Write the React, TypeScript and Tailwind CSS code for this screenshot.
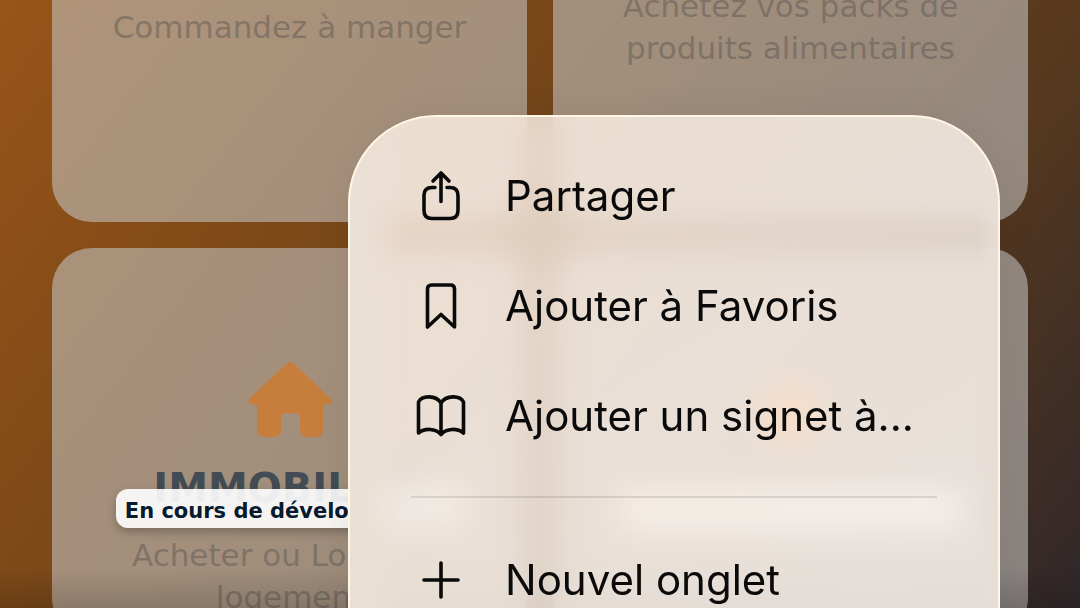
import type { ReactNode } from "react";

function Card({ children, className = "" }: { children?: ReactNode; className?: string }) {
  return (
    <section
      className={`flex flex-col items-center rounded-[40px] bg-[#c2c0bd]/60 text-center text-[31px] leading-[42px] text-[#5c5854]/50 ${className}`}
    >
      {children}
    </section>
  );
}

function HouseIcon() {
  return (
    <svg width="84" height="76" viewBox="0 0 84 76" fill="#c77e3d" aria-hidden="true">
      <path d="M38.500 1.500Q42-1.500 45.500 1.500L82 36Q86 41.500 80 42.500H75V68Q75 75 68 75H59Q52 75 52 68V55Q52 51.500 48.500 51.500H36.500Q33 51.500 33 55V68Q33 75 26 75H16Q9 75 9 68V42.500H4Q-2 41.500 2 36Z" />
    </svg>
  );
}

function MenuIcon({ children }: { children: ReactNode }) {
  return (
    <svg
      width="56"
      height="56"
      viewBox="0 -1 56 56"
      fill="none"
      stroke="currentColor"
      strokeWidth="3.6"
      strokeLinecap="round"
      strokeLinejoin="round"
      className="shrink-0"
      aria-hidden="true"
    >
      {children}
    </svg>
  );
}

function MenuItem({ icon, label }: { icon: ReactNode; label: string }) {
  return (
    <button
      type="button"
      role="menuitem"
      className="flex h-[110px] w-full items-center gap-9 pl-[63px] text-left text-[42px] whitespace-nowrap"
    >
      <MenuIcon>{icon}</MenuIcon>
      {label}
    </button>
  );
}

export default function App() {
  return (
    <main className="relative h-screen overflow-hidden bg-[linear-gradient(128deg,#985518_0%,#824b18_24%,#6e431b_48%,#53371f_74%,#30272a_100%)] font-['DejaVu_Sans',sans-serif]">
      <div className="-mt-[168px] grid auto-rows-[390px] grid-cols-2 gap-[26px] px-[52px]">
        <Card className="justify-center">
          <p>Commandez à manger</p>
        </Card>
        <Card className="justify-center px-12">
          <p>
            Achetez vos packs de
            <br />
            produits alimentaires
          </p>
        </Card>
        <Card className="pt-[114px]">
          <HouseIcon />
          <div className="relative mt-7 flex w-full justify-center">
            <h2 className="text-[40px] leading-[44px] font-bold text-[#434c54]">IMMOBILIER</h2>
            <span className="absolute top-[23px] rounded-xl bg-white/90 px-[9px] pt-[7px] pb-[2px] text-[21px] leading-[30px] font-bold whitespace-nowrap text-[#081a2e] shadow-[0_4px_10px_rgba(0,0,0,0.25)]">
              En cours de développement
            </span>
          </div>
          <p className="mt-6">
            Acheter ou Louer un
            <br />
            logement
          </p>
        </Card>
        <Card className="pt-[134px]">
          <div className="size-16 rounded-full bg-[#d9883f]" />
          <div className="mt-11 h-10 w-[346px] rounded-xl bg-white/60" />
        </Card>
      </div>

      <div className="absolute inset-x-0 bottom-0 h-10 bg-linear-to-b from-transparent to-black/15" />

      <div
        role="menu"
        className="absolute top-[115px] right-20 w-[652px] rounded-[88px] border-2 border-[#fff6e6] bg-[linear-gradient(90deg,#ebe0d5_0px,#ebe0d5_12px,transparent_56px),linear-gradient(270deg,#e8ded6_0px,transparent_20px),linear-gradient(150deg,#fff3e8c8,#fffaf6c8)] pt-[23px] pb-20 font-['Inter',sans-serif] text-[#0b0a0a] shadow-[0_0_40px_rgba(0,0,0,0.06)] backdrop-blur-lg"
      >
        <MenuItem
          label="Partager"
          icon={
            <>
              <path d="M22 19.500h-3q-8 0-8 8v15q0 8 8 8h18q8 0 8-8v-15q0-8-8-8h-3" />
              <path d="M28 33.500V5.500M20 13l8-8 8 8" />
            </>
          }
        />
        <MenuItem
          label="Ajouter à Favoris"
          icon={<path d="M14.500 49V11q0-4 4-4h19q4 0 4 4v38L28 36.500Z" />}
        />
        <MenuItem
          label="Ajouter un signet à..."
          icon={
            <path d="M28 15C23 7 9 7 5.500 14v31c6-5 17-5 22.500 1.500C33.500 40 44.500 40 50.500 45V14C47 7 33 7 28 15ZM28 15v31" />
          }
        />
        <hr className="mx-[61px] my-[26px] border-t-2 border-black/10" />
        <MenuItem label="Nouvel onglet" icon={<path d="M28 11v34M11 28h34" />} />
      </div>
    </main>
  );
}
